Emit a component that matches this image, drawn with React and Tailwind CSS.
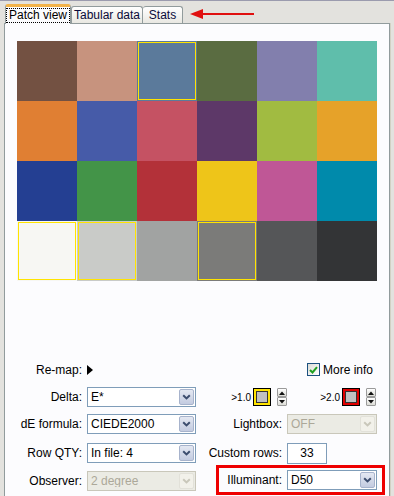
import React from "react";

const ROWS = [
  ["#735142", "#c7937e", "#5b7a9b", "#5a6c41", "#827fad", "#5fbeab"],
  ["#e07f33", "#465ba8", "#c55263", "#5d3868", "#a1bb41", "#e6a229"],
  ["#243f92", "#439448", "#b33139", "#eec519", "#bf5796", "#008aab"],
  ["#f7f7f3", "#c9cbc8", "#a1a3a2", "#7b7b79", "#555658", "#333436"],
];

// cells that carry the yellow "over tolerance" outline
const FLAGGED = new Set(["0-2", "3-0", "3-1", "3-3"]);

function Chevron({ color }) {
  return (
    <svg width="9" height="6" viewBox="0 0 9 6">
      <path d="M1.2 1.2 L4.5 4.4 L7.8 1.2" fill="none" stroke={color} strokeWidth="2" />
    </svg>
  );
}

function Combo({ value, width = "w-[109px]", disabled = false }) {
  return (
    <div
      className={`${width} flex h-[20px] items-center border ${
        disabled ? "border-[#c9c7ba] bg-[#ebebe4] text-[#aca899]" : "border-[#7f9db9] bg-white text-black"
      }`}
    >
      <span className="flex-1 truncate pl-[3px] leading-none">{value}</span>
      <span
        className={`mr-px flex h-[16px] w-[15px] items-center justify-center rounded-[2px] border ${
          disabled ? "border-[#e2e1d9] bg-[#f2f1ea]" : "border-[#a7b3cc] bg-gradient-to-b from-[#e4e8f2] to-[#c3cbe0]"
        }`}
      >
        <Chevron color={disabled ? "#c9c7ba" : "#3c4d6e"} />
      </span>
    </div>
  );
}

function Spinner() {
  const btn = "flex h-[9px] w-[10px] items-center justify-center rounded-[1px] border border-[#9a9a9a] bg-gradient-to-b from-white to-[#dcdcd6]";
  return (
    <div className="flex flex-col gap-0">
      <div className={btn}>
        <svg width="6" height="4" viewBox="0 0 6 4">
          <path d="M0 4 L3 0.5 L6 4 Z" fill="#111" />
        </svg>
      </div>
      <div className={btn}>
        <svg width="6" height="4" viewBox="0 0 6 4">
          <path d="M0 0 L3 3.5 L6 0 Z" fill="#111" />
        </svg>
      </div>
    </div>
  );
}

function Swatch({ ring }) {
  return (
    <div className="h-[18px] w-[18px] border border-black">
      <div className={`h-full w-full border-2 ${ring}`}>
        <div className="h-full w-full border border-[#333] bg-[#c0c0c0]" />
      </div>
    </div>
  );
}

export default function App() {
  return (
    <div
      className="h-[496px] w-[394px] overflow-hidden bg-[#e3e2de] text-[12px] text-black"
      style={{ fontFamily: '"Liberation Sans", Arial, sans-serif' }}
    >
      <div className="h-px bg-[#9b9bae]" />

      {/* tabs */}
      <div className="flex h-[22px] items-end pl-[5px]">
        <div className="relative z-10 -mb-px flex h-[20px] w-[66px] items-start justify-center whitespace-nowrap rounded-t-[3px] border-x border-t-[3px] border-x-[#919b9c] border-t-[#f2b34a] bg-[#fcfcfe] pt-[1px]">
          <span className="border border-dotted border-black px-[2px] leading-[13px]">Patch view</span>
        </div>
        <div className="flex h-[17px] w-[72px] items-center justify-center whitespace-nowrap rounded-t-[3px] border-x border-t border-[#919b9c] bg-gradient-to-b from-white to-[#e9e8e2] text-[#0a0a3a]">
          Tabular data
        </div>
        <div className="flex h-[17px] w-[40px] items-center justify-center rounded-t-[3px] border-r border-t border-[#919b9c] bg-gradient-to-b from-white to-[#e9e8e2] text-[#0a0a3a]">
          Stats
        </div>
        <svg width="64" height="12" viewBox="0 0 64 12" className="mb-[3px] ml-[7px]">
          <path d="M0 6 L13 1 L13 11 Z" fill="#e01010" />
          <rect x="12" y="5" width="52" height="2" fill="#e01010" />
        </svg>
      </div>

      {/* panel */}
      <div className="ml-[4px] h-[480px] w-[386px] border-x border-t border-[#919b9c] bg-[#fcfcfe] shadow-[1px_0_0_#d2d1c4]">
        <div className="pl-[12px] pt-[17px]">
          <div className="grid w-[360px] grid-cols-6">
            {ROWS.map((row, r) =>
              row.map((c, i) => (
                <div key={`${r}-${i}`} className="h-[60px] w-[60px] p-px" style={{ backgroundColor: c }}>
                  {FLAGGED.has(`${r}-${i}`) && <div className="h-full w-full border border-[#ffe400]" />}
                </div>
              ))
            )}
          </div>
        </div>

        {/* controls */}
        <div className="mt-[82px] flex flex-col">
          <div className="flex h-[13px] items-center">
            <div className="flex w-[192px] items-center">
              <span className="w-[77px] text-right">Re-map:</span>
              <svg width="6" height="10" viewBox="0 0 6 10" className="ml-[5px]">
                <path d="M0 0 L6 5 L0 10 Z" fill="#000" />
              </svg>
            </div>
            <div className="flex items-center pl-[110px]">
              <div className="flex h-[13px] w-[13px] items-center justify-center border border-[#1c5180] bg-gradient-to-br from-[#dcdcd7] to-white">
                <svg width="9" height="8" viewBox="0 0 9 8">
                  <path d="M1 4 L3.5 6.5 L8 1.2" fill="none" stroke="#21a121" strokeWidth="2" />
                </svg>
              </div>
              <span className="ml-[3px]">More info</span>
            </div>
          </div>

          <div className="mt-[11px] flex h-[20px] items-center">
            <div className="flex w-[192px] items-center">
              <span className="w-[77px] text-right">Delta:</span>
              <div className="ml-[5px]">
                <Combo value="E*" />
              </div>
            </div>
            <div className="flex items-center">
              <span className="w-[54px] text-right text-[10px]">&gt;1.0</span>
              <div className="ml-[2px]">
                <Swatch ring="border-[#ffe400]" />
              </div>
              <div className="ml-[6px]">
                <Spinner />
              </div>
              <span className="w-[53px] text-right text-[10px]">&gt;2.0</span>
              <div className="ml-[2px]">
                <Swatch ring="border-[#e00000]" />
              </div>
              <div className="ml-[6px]">
                <Spinner />
              </div>
            </div>
          </div>

          <div className="mt-[7px] flex h-[20px] items-center">
            <div className="flex w-[192px] items-center">
              <span className="w-[77px] text-right">dE formula:</span>
              <div className="ml-[5px]">
                <Combo value="CIEDE2000" />
              </div>
            </div>
            <div className="flex items-center">
              <span className="w-[85px] text-right">Lightbox:</span>
              <div className="ml-[5px]">
                <Combo value="OFF" width="w-[90px]" disabled />
              </div>
            </div>
          </div>

          <div className="mt-[9px] flex h-[20px] items-center">
            <div className="flex w-[192px] items-center">
              <span className="w-[77px] text-right">Row QTY:</span>
              <div className="ml-[5px]">
                <Combo value="In file: 4" />
              </div>
            </div>
            <div className="flex items-center">
              <span className="w-[85px] text-right">Custom rows:</span>
              <div className="ml-[5px] flex h-[21px] w-[40px] items-center justify-center border border-[#7f9db9] bg-white">
                33
              </div>
            </div>
          </div>

          <div className="mt-[2px] flex h-[30px] items-start">
            <div className="flex w-[192px] items-center pt-[6px]">
              <span className="w-[77px] text-right">Observer:</span>
              <div className="ml-[5px]">
                <Combo value="2 degree" disabled />
              </div>
            </div>
            <div className="ml-[19px] flex h-[30px] items-center border-[3px] border-[#ee0000] pr-[5px]">
              <span className="w-[63px] text-right">Illuminant:</span>
              <div className="ml-[5px]">
                <Combo value="D50" width="w-[90px]" />
              </div>
            </div>
          </div>
        </div>
      </div>
    </div>
  );
}
